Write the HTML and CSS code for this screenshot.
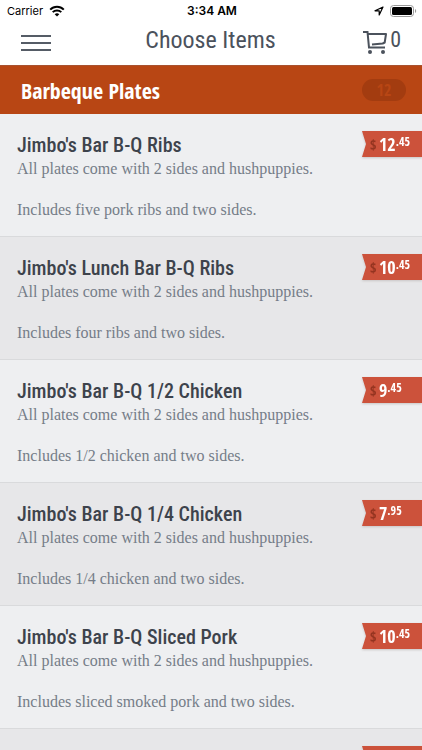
FILE: index.html
```
<!DOCTYPE html>
<html lang="en">
<head>
    <meta charset="utf-8">
    <meta name="viewport" content="width=device-width, initial-scale=1">
    <title>Choose Items</title>
    <link rel="stylesheet" href="styles.css">
</head>
<body>
    <div class="status-bar">
        <div class="carrier">
            <span>Carrier</span>
            <svg width="16" height="12" viewBox="0 0 16 12" fill="none" stroke="#000" stroke-width="2">
                <path d="M1.2 4.6C5 .8 11 .8 14.8 4.6"/>
                <path d="M3.7 7.1c2.4-2.3 6.2-2.3 8.6 0"/>
                <path d="M8 11.6 5.7 9.2c1.3-1.2 3.3-1.2 4.6 0z" fill="#000" stroke="none"/>
            </svg>
        </div>
        <div class="clock">3:34 AM</div>
        <div class="indicators">
            <svg width="10" height="10" viewBox="0 0 10 10" fill="none" stroke="#000" stroke-width="1.2" stroke-linejoin="round">
                <path d="M9 1 1 4.8h4.2V9z"/>
            </svg>
            <svg width="27" height="12" viewBox="0 0 27 12">
                <rect x=".5" y=".5" width="23" height="11" rx="3" fill="#fff" stroke="#999"/>
                <rect x="2" y="2" width="20" height="8" rx="1.5"/>
                <path d="M25 4c1.6.5 1.6 3.5 0 4z" fill="#999"/>
            </svg>
        </div>
    </div>

    <header class="nav-bar">
        <button class="menu-btn" aria-label="Menu">
            <svg width="32" height="18" viewBox="0 0 32 18" stroke="#555c66" stroke-width="2">
                <path d="M1 2h30M1 9h30M1 16h30"/>
            </svg>
        </button>
        <h1>Choose Items</h1>
        <button class="cart-btn" aria-label="Cart, 0 items">
            <svg width="24" height="24" viewBox="0 0 24 24" fill="none" stroke="#4b525c" stroke-width="2">
                <path d="M0 2h4.500l1.500 15.500h16"/>
                <path d="M5 4h18l-1.300 8.500-2 1L9 14.500" stroke-linejoin="round"/>
                <circle cx="7" cy="22" r="2" fill="#4b525c" stroke="none"/>
                <circle cx="20" cy="22" r="2" fill="#4b525c" stroke="none"/>
            </svg>
            <span>0</span>
        </button>
    </header>

    <div class="category">
        <h2>Barbeque Plates</h2>
        <span class="count">12</span>
    </div>

    <ul class="items">
        <li>
            <div class="info">
                <h3>Jimbo's Bar B-Q Ribs</h3>
                <p>All plates come with 2 sides and hushpuppies.</p>
                <p>Includes five pork ribs and two sides.</p>
            </div>
            <div class="price"><div class="tag"><i>$</i><b>12</b><sup>.45</sup></div></div>
        </li>
        <li>
            <div class="info">
                <h3>Jimbo's Lunch Bar B-Q Ribs</h3>
                <p>All plates come with 2 sides and hushpuppies.</p>
                <p>Includes four ribs and two sides.</p>
            </div>
            <div class="price"><div class="tag"><i>$</i><b>10</b><sup>.45</sup></div></div>
        </li>
        <li>
            <div class="info">
                <h3>Jimbo's Bar B-Q 1/2 Chicken</h3>
                <p>All plates come with 2 sides and hushpuppies.</p>
                <p>Includes 1/2 chicken and two sides.</p>
            </div>
            <div class="price"><div class="tag"><i>$</i><b>9</b><sup>.45</sup></div></div>
        </li>
        <li>
            <div class="info">
                <h3>Jimbo's Bar B-Q 1/4 Chicken</h3>
                <p>All plates come with 2 sides and hushpuppies.</p>
                <p>Includes 1/4 chicken and two sides.</p>
            </div>
            <div class="price"><div class="tag"><i>$</i><b>7</b><sup>.95</sup></div></div>
        </li>
        <li>
            <div class="info">
                <h3>Jimbo's Bar B-Q Sliced Pork</h3>
                <p>All plates come with 2 sides and hushpuppies.</p>
                <p>Includes sliced smoked pork and two sides.</p>
            </div>
            <div class="price"><div class="tag"><i>$</i><b>10</b><sup>.45</sup></div></div>
        </li>
        <li>
            <div class="price"><div class="tag"></div></div>
        </li>
    </ul>
</body>
</html>
```
FILE: styles.css
```
* {
    box-sizing: border-box;
}
body {
    margin: 0;
    height: 100vh;
    display: flex;
    flex-direction: column;
    overflow: hidden;
    background: #fff;
    font-family: "Open Sans Condensed", "Liberation Sans Narrow", sans-serif;
    color: #3d434c;
}
h1, h2, h3, p, ul {
    margin: 0;
    padding: 0;
}
button {
    border: none;
    background: none;
    padding: 0;
    font: inherit;
    color: inherit;
    cursor: pointer;
}
svg {
    display: block;
}

/* status bar */
.status-bar {
    display: grid;
    grid-template-columns: 1fr auto 1fr;
    align-items: center;
    height: 21px;
    flex: none;
    padding: 0 5px 0 7px;
    font: 11px Inter, sans-serif;
    color: #000;
}
.carrier, .indicators {
    display: flex;
    align-items: center;
    gap: 6px;
}
.indicators {
    justify-content: flex-end;
}
.clock {
    font-size: 12px;
    font-weight: 600;
}

/* nav bar */
.nav-bar {
    display: grid;
    grid-template-columns: 1fr auto 1fr;
    align-items: center;
    height: 44px;
    flex: none;
    padding: 0 21px 6px 20px;
    color: #4b525c;
}
.nav-bar h1, .cart-btn {
    font-family: "Roboto Condensed", "Open Sans Condensed", sans-serif;
    font-size: 24px;
    font-weight: normal;
    line-height: 38px;
}
.menu-btn {
    justify-self: start;
    padding-top: 6px;
}
.cart-btn {
    justify-self: end;
    display: flex;
    align-items: center;
    gap: 3px;
    font-size: 22px;
}
.cart-btn svg {
    margin-top: 4px;
}

/* category heading */
.category {
    display: flex;
    align-items: center;
    justify-content: space-between;
    height: 49px;
    flex: none;
    padding: 0 16px 0 21px;
    background: #b84614;
    border-top: 1px solid #a8522f;
    color: #fff;
}
.category h2 {
    font-size: 22px;
    line-height: 28px;
}
.count {
    width: 44px;
    border-radius: 11px;
    background: #a33c10;
    color: #b84614;
    font-size: 16px;
    font-weight: bold;
    line-height: 22px;
    text-align: center;
}

/* item list */
.items {
    flex: 1;
    min-height: 0;
    overflow-y: auto;
    scrollbar-width: none;
    list-style: none;
}
.items li {
    display: flex;
    justify-content: space-between;
    min-height: 123px;
    padding: 17px 0 16px 17px;
    background: #eeeff1;
    border-bottom: 1px solid #d9dadc;
}
.items li:nth-child(even) {
    background: #e7e7e9;
}
.items h3 {
    font-family: "Roboto Condensed", "Open Sans Condensed", sans-serif;
    font-size: 20px;
    font-weight: 500;
    line-height: 28px;
}
.items p {
    font: 16px/20px "Liberation Serif", serif;
    color: #757d88;
}
.items p + p {
    margin-top: 21px;
}

/* price ribbon */
.price {
    flex: none;
    margin-left: auto;
    filter: drop-shadow(0 1px 1px #c9c5c5);
}
.tag {
    display: flex;
    align-items: center;
    width: 60px;
    height: 26px;
    padding-left: 8px;
    background: #cc523b;
    clip-path: polygon(0 0, 100% 0, 100% 100%, 0 100%, 4px 50%);
    color: #fff;
    font-weight: bold;
}
.tag i {
    width: 9px;
    font-size: 14px;
    font-style: normal;
    color: #943420;
}
.tag b {
    font-size: 18px;
}
.tag sup {
    align-self: flex-start;
    margin-top: 4px;
    font-size: 12px;
    line-height: 14px;
}
```
